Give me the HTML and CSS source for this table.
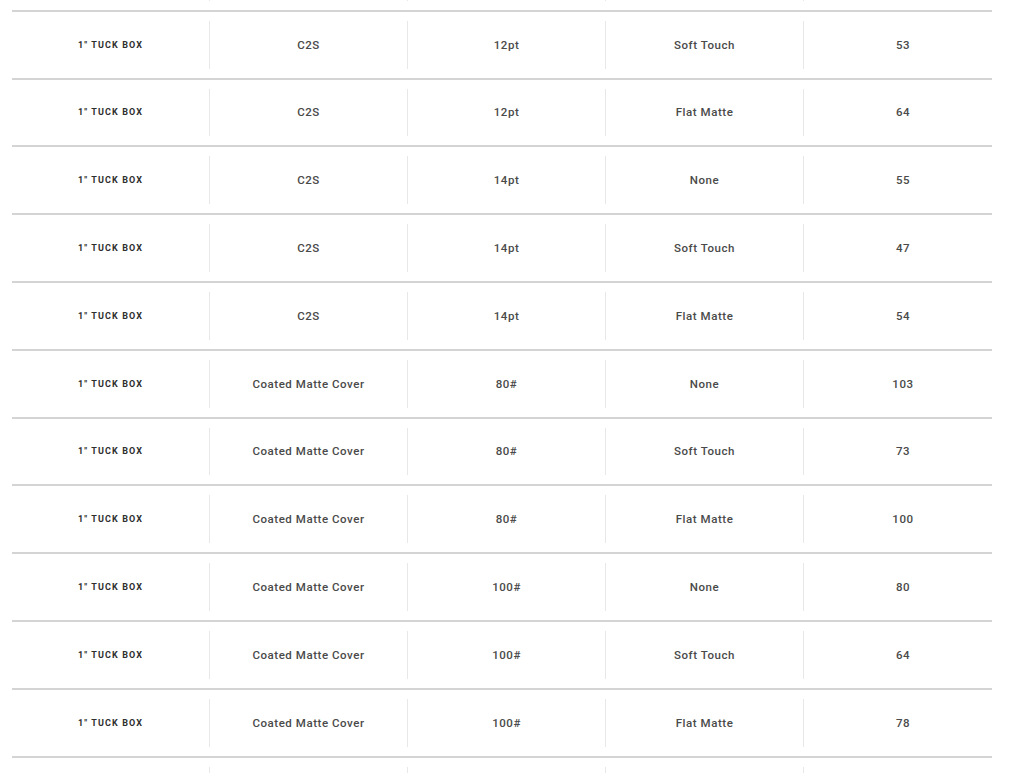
FILE: index.html
```html
<!DOCTYPE html>
<html lang="en">
<head>
<meta charset="utf-8">
<title>Tuck box pricing</title>
<link rel="stylesheet" href="styles.css">
</head>
<body>
<div class="table">
  <div class="row" aria-hidden="true"><div class="cell"></div><div class="cell"></div><div class="cell"></div><div class="cell"></div><div class="cell"></div></div>
  <div class="row"><div class="cell head">1" TUCK BOX</div><div class="cell">C2S</div><div class="cell">12pt</div><div class="cell">Soft Touch</div><div class="cell">53</div></div>
  <div class="row"><div class="cell head">1" TUCK BOX</div><div class="cell">C2S</div><div class="cell">12pt</div><div class="cell">Flat Matte</div><div class="cell">64</div></div>
  <div class="row"><div class="cell head">1" TUCK BOX</div><div class="cell">C2S</div><div class="cell">14pt</div><div class="cell">None</div><div class="cell">55</div></div>
  <div class="row"><div class="cell head">1" TUCK BOX</div><div class="cell">C2S</div><div class="cell">14pt</div><div class="cell">Soft Touch</div><div class="cell">47</div></div>
  <div class="row"><div class="cell head">1" TUCK BOX</div><div class="cell">C2S</div><div class="cell">14pt</div><div class="cell">Flat Matte</div><div class="cell">54</div></div>
  <div class="row"><div class="cell head">1" TUCK BOX</div><div class="cell">Coated Matte Cover</div><div class="cell">80#</div><div class="cell">None</div><div class="cell">103</div></div>
  <div class="row"><div class="cell head">1" TUCK BOX</div><div class="cell">Coated Matte Cover</div><div class="cell">80#</div><div class="cell">Soft Touch</div><div class="cell">73</div></div>
  <div class="row"><div class="cell head">1" TUCK BOX</div><div class="cell">Coated Matte Cover</div><div class="cell">80#</div><div class="cell">Flat Matte</div><div class="cell">100</div></div>
  <div class="row"><div class="cell head">1" TUCK BOX</div><div class="cell">Coated Matte Cover</div><div class="cell">100#</div><div class="cell">None</div><div class="cell">80</div></div>
  <div class="row"><div class="cell head">1" TUCK BOX</div><div class="cell">Coated Matte Cover</div><div class="cell">100#</div><div class="cell">Soft Touch</div><div class="cell">64</div></div>
  <div class="row"><div class="cell head">1" TUCK BOX</div><div class="cell">Coated Matte Cover</div><div class="cell">100#</div><div class="cell">Flat Matte</div><div class="cell">78</div></div>
  <div class="row" aria-hidden="true"><div class="cell"></div><div class="cell"></div><div class="cell"></div><div class="cell"></div><div class="cell"></div></div>
</div>
</body>
</html>
```

FILE: styles.css
```css
html, body {
  margin: 0;
  padding: 0;
  background: #ffffff;
  overflow: hidden;
}

.table {
  margin: -58px 0 0 12px;
  width: 980px;
  font-family: Roboto, "Liberation Sans", sans-serif;
}

.row {
  box-sizing: border-box;
  height: 67.8px;
  border-top: 2px solid #d4d4d4;
  display: grid;
  grid-template-columns: repeat(5, 198px);
  align-items: stretch;
}

.cell {
  margin: 9px 0;
  display: flex;
  align-items: center;
  justify-content: center;
  font-size: 11.5px;
  font-weight: 500;
  letter-spacing: 0.55px;
  color: #4a4a4a;
  border-right: 1px solid #e8e8e8;
}

.cell:last-child {
  border-right: none;
}

.cell.head {
  font-size: 9px;
  font-weight: 700;
  letter-spacing: 1.1px;
  color: #2e2e2e;
}
```
